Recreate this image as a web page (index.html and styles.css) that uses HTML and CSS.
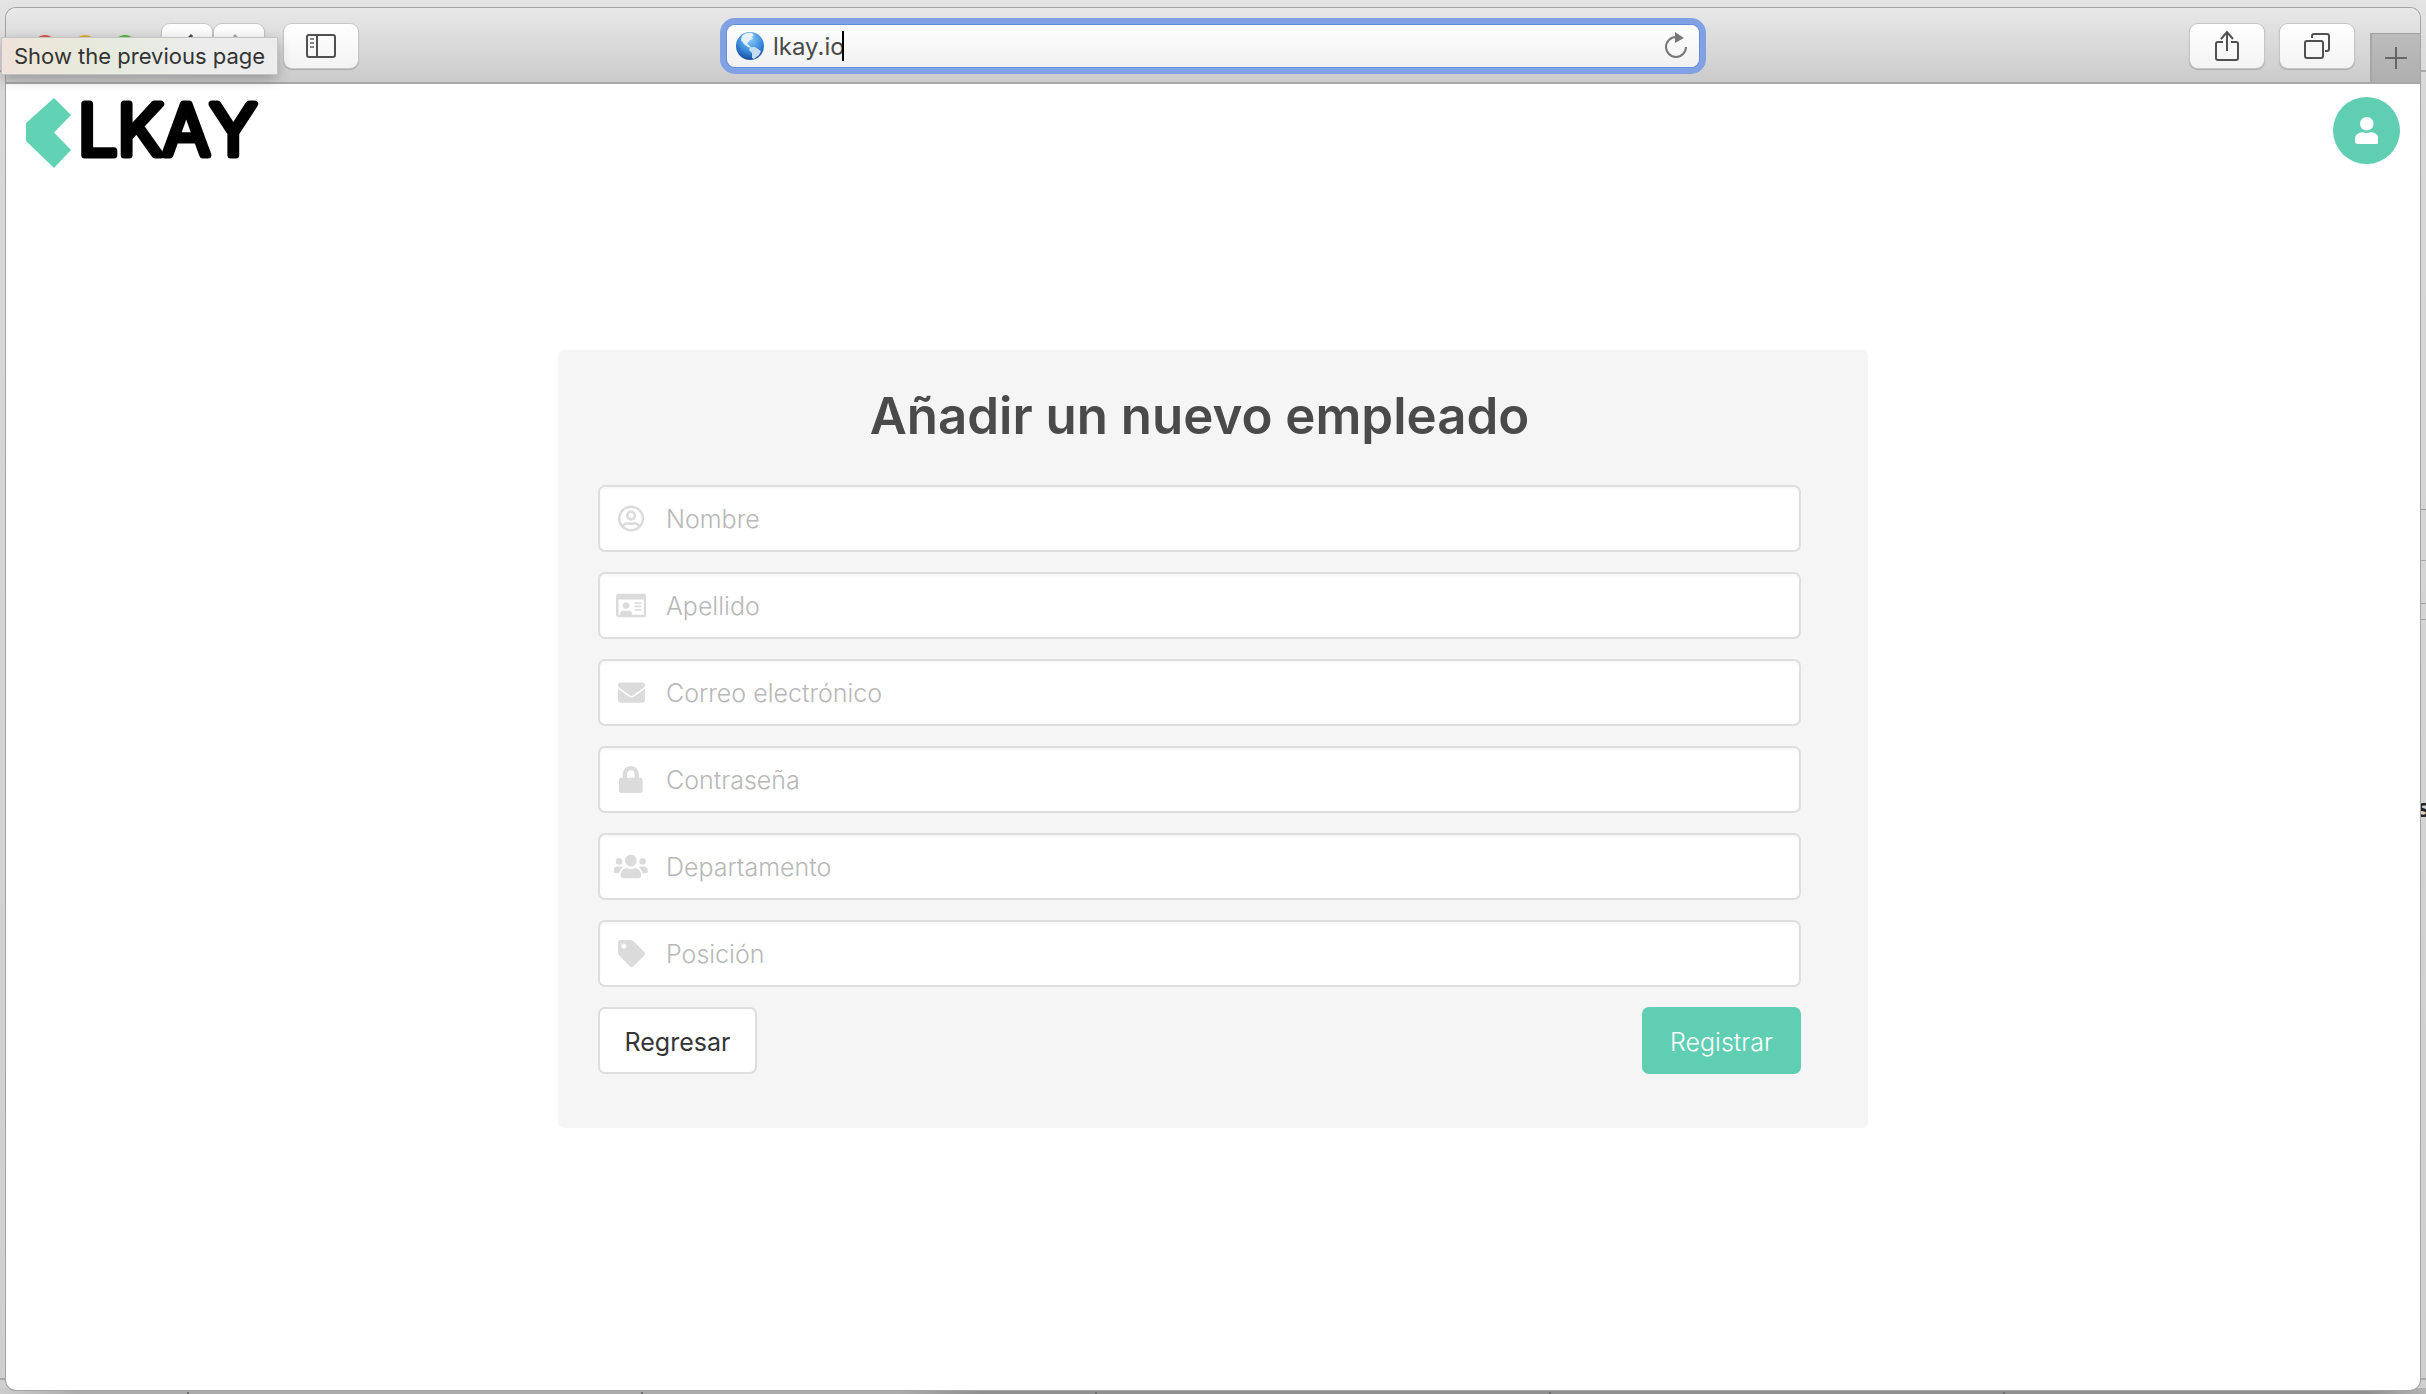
FILE: index.html
```html
<!DOCTYPE html>
<html lang="es">
<head>
<meta charset="utf-8">
<meta name="viewport" content="width=device-width, initial-scale=1">
<title>LKAY</title>
<link rel="stylesheet" href="styles.css">
</head>
<body>
<span class="behind-text" aria-hidden="true">s</span>
<div class="window">
  <div class="toolbar">
    <div class="toolbar-start">
      <div class="lights"><span class="light red"></span><span class="light amber"></span><span class="light green"></span></div>
      <div class="nav">
        <button class="tool nav-button" type="button" aria-label="Back"><svg width="14" height="24" viewBox="0 0 14 24"><path d="M12 1 2 12l10 11" fill="none" stroke="#4d4d4d" stroke-width="3"/></svg></button>
        <button class="tool nav-button" type="button" aria-label="Forward"><svg width="14" height="24" viewBox="0 0 14 24"><path d="m2 1 10 11L2 23" fill="none" stroke="#aaa" stroke-width="3"/></svg></button>
      </div>
      <button class="tool" type="button" aria-label="Sidebar"><svg width="30" height="24" viewBox="0 0 30 24"><path d="M3 1h24q2 0 2 2v18q0 2-2 2H3q-2 0-2-2V3q0-2 2-2zM11 1v22" fill="none" stroke="#505050" stroke-width="2"/><path d="M4 5h4M4 9h4M4 13h4" stroke="#888" stroke-width="2"/></svg></button>
    </div>
    <div class="address">
      <svg class="globe" width="30" height="30" viewBox="0 0 30 30">
        <defs><radialGradient id="sea" cx=".5" cy=".25" r=".75"><stop offset="0" stop-color="#8ccdf8"/><stop offset=".55" stop-color="#3f8fe0"/><stop offset="1" stop-color="#174f9c"/></radialGradient></defs>
        <circle cx="15" cy="15" r="14" fill="url(#sea)"/>
        <path d="M7 5q4-4 10-3l2 2-2 2 1 2-3 1-3 4 2 1 2 3-3-1-4-3-3-4z" fill="#e4f1f8"/>
        <path d="M15 16l5 0 6 4-2 4-5 4-2-1 0-5-3-3z" fill="#c3dcf2"/>
      </svg>
      <input class="url" type="text" value="lkay.io" aria-label="Address">
      <span class="caret"></span>
      <button class="reload" type="button" aria-label="Reload"><svg width="24" height="28" viewBox="0 0 24 28"><path d="M22 15a10 10 0 1 1-10-10" fill="none" stroke="#777" stroke-width="2"/><path d="M11 0v11l9-5z" fill="#777"/></svg></button>
    </div>
    <div class="toolbar-end">
      <button class="tool" type="button" aria-label="Share"><svg width="24" height="32" viewBox="0 0 24 32"><path d="M8 12H3q-2 0-2 2v14q0 2 2 2h18q2 0 2-2V14q0-2-2-2h-5M12 21V3M6 9l6-7 6 7" fill="none" stroke="#505050" stroke-width="2"/></svg></button>
      <button class="tool" type="button" aria-label="Tabs"><svg width="26" height="26" viewBox="0 0 26 26"><path d="M3 8h14q2 0 2 2v13q0 2-2 2H3q-2 0-2-2V10q0-2 2-2zM8 5V3q0-2 2-2h13q2 0 2 2v13q0 2-2 2h-2" fill="none" stroke="#505050" stroke-width="2"/></svg></button>
      <button class="new-tab" type="button" aria-label="New tab"><svg width="22" height="22" viewBox="0 0 22 22"><path d="M11 0v22M0 11h22" stroke="#666" stroke-width="2"/></svg></button>
    </div>
    <div class="tooltip" role="tooltip">Show the previous page</div>
  </div>

  <header class="site-header">
    <a class="logo" href="#" aria-label="LKAY">
      <svg width="252" height="72" viewBox="0 0 252 72">
        <path d="M28 1 45 18 28 35.500 45 53 28 71 0 44V26z" fill="#62d2b5"/>
        <text class="logo-text" x="52" y="58">LKAY</text>
      </svg>
    </a>
    <button class="avatar" type="button" aria-label="Cuenta"><svg class="icon" viewBox="0 0 448 512"><path d="M224 256c70.700 0 128-57.300 128-128S294.700 0 224 0 96 57.300 96 128s57.300 128 128 128zm89.600 32h-16.700c-22.200 10.200-46.900 16-72.900 16s-50.600-5.800-72.900-16h-16.700C60.200 288 0 348.200 0 422.400V464c0 26.500 21.500 48 48 48h352c26.500 0 48-21.500 48-48v-41.600c0-74.200-60.200-134.400-134.400-134.400z"/></svg></button>
  </header>

  <main>
    <form class="card">
      <h1>Añadir un nuevo empleado</h1>
      <label class="field">
        <span class="field-icon"><svg class="icon" viewBox="0 0 496 512"><path d="M248 104c-53 0-96 43-96 96s43 96 96 96 96-43 96-96-43-96-96-96zm0 144c-26.500 0-48-21.500-48-48s21.500-48 48-48 48 21.500 48 48-21.500 48-48 48zm0-240C111 8 0 119 0 256s111 248 248 248 248-111 248-248S385 8 248 8zm0 448c-49.700 0-95.100-18.300-130.100-48.400 14.900-23 40.400-38.600 69.600-39.500 20.800 6.400 40.600 9.600 60.500 9.600s39.700-3.100 60.500-9.600c29.200 1 54.700 16.500 69.600 39.500-35 30.100-80.400 48.400-130.100 48.400zm162.700-84.100c-24.400-31.400-62.100-51.900-105.100-51.900-10.200 0-26 9.600-57.600 9.600-31.500 0-47.400-9.600-57.600-9.600-42.900 0-80.600 20.500-105.100 51.900C61.900 339.200 48 299.200 48 256c0-110.300 89.700-200 200-200s200 89.700 200 200c0 43.200-13.900 83.200-37.300 115.900z"/></svg></span>
        <input type="text" placeholder="Nombre" aria-label="Nombre">
      </label>
      <label class="field">
        <span class="field-icon"><svg class="icon" viewBox="0 0 576 512"><path d="M528 32H48C21.500 32 0 53.500 0 80v352c0 26.500 21.500 48 48 48h480c26.500 0 48-21.500 48-48V80c0-26.500-21.500-48-48-48zm0 400H303.200c.9-4.500.8 3.600.8-22.400 0-31.800-30.100-57.600-67.200-57.600-10.800 0-18.700 8-44.800 8-26.900 0-33.400-8-44.800-8-37.100 0-67.200 25.800-67.200 57.600 0 26-.2 17.900.8 22.400H48V144h480v288zm-168-80h112c4.400 0 8-3.600 8-8v-16c0-4.400-3.600-8-8-8H360c-4.400 0-8 3.600-8 8v16c0 4.400 3.600 8 8 8zm0-64h112c4.400 0 8-3.600 8-8v-16c0-4.400-3.600-8-8-8H360c-4.400 0-8 3.600-8 8v16c0 4.400 3.600 8 8 8zm0-64h112c4.400 0 8-3.600 8-8v-16c0-4.400-3.600-8-8-8H360c-4.400 0-8 3.600-8 8v16c0 4.400 3.600 8 8 8zm-168 96c35.300 0 64-28.700 64-64s-28.700-64-64-64-64 28.700-64 64 28.700 64 64 64z"/></svg></span>
        <input type="text" placeholder="Apellido" aria-label="Apellido">
      </label>
      <label class="field">
        <span class="field-icon"><svg class="icon" viewBox="0 0 512 512"><path d="M502.300 190.800c3.900-3.100 9.700-.2 9.700 4.700V400c0 26.500-21.500 48-48 48H48c-26.500 0-48-21.500-48-48V195.600c0-5 5.700-7.800 9.700-4.700 22.400 17.400 52.100 39.500 154.100 113.600 21.100 15.400 56.700 47.800 92.200 47.600 35.700.3 72-32.800 92.300-47.600 102-74.100 131.600-96.300 154-113.700zM256 320c23.200.4 56.600-29.200 73.400-41.400 132.700-96.300 142.800-104.700 173.400-128.700 5.800-4.500 9.200-11.500 9.200-18.900v-19c0-26.500-21.500-48-48-48H48c-26.500 0-48 21.500-48 48v19c0 7.400 3.400 14.300 9.200 18.900 30.600 23.900 40.700 32.400 173.400 128.700 16.800 12.200 50.200 41.800 73.400 41.400z"/></svg></span>
        <input type="email" placeholder="Correo electrónico" aria-label="Correo electrónico">
      </label>
      <label class="field">
        <span class="field-icon"><svg class="icon" viewBox="0 0 448 512"><path d="M400 224h-24v-72C376 68.200 307.800 0 224 0S72 68.200 72 152v72H48c-26.500 0-48 21.500-48 48v192c0 26.500 21.500 48 48 48h352c26.500 0 48-21.500 48-48V272c0-26.500-21.500-48-48-48zm-104 0H152v-72c0-39.700 32.300-72 72-72s72 32.300 72 72v72z"/></svg></span>
        <input type="password" placeholder="Contraseña" aria-label="Contraseña">
      </label>
      <label class="field">
        <span class="field-icon"><svg class="icon" viewBox="0 0 640 512"><path d="M96 224c35.300 0 64-28.700 64-64s-28.700-64-64-64-64 28.700-64 64 28.700 64 64 64zm448 0c35.300 0 64-28.700 64-64s-28.700-64-64-64-64 28.700-64 64 28.700 64 64 64zm32 32h-64c-17.600 0-33.500 7.100-45.100 18.600 40.300 22.100 68.900 62 75.100 109.400h66c17.700 0 32-14.300 32-32v-32c0-35.300-28.700-64-64-64zm-256 0c61.900 0 112-50.100 112-112S381.900 32 320 32 208 82.100 208 144s50.100 112 112 112zm76.800 32h-8.300c-20.800 10-43.900 16-68.500 16s-47.600-6-68.500-16h-8.300C179.600 288 128 339.600 128 403.200V432c0 26.500 21.500 48 48 48h288c26.500 0 48-21.500 48-48v-28.800c0-63.600-51.600-115.200-115.200-115.200zm-223.700-13.400C161.500 263.100 145.600 256 128 256H64c-35.300 0-64 28.700-64 64v32c0 17.700 14.300 32 32 32h65.900c6.300-47.400 34.900-87.300 75.200-109.400z"/></svg></span>
        <input type="text" placeholder="Departamento" aria-label="Departamento">
      </label>
      <label class="field">
        <span class="field-icon"><svg class="icon" viewBox="0 0 512 512"><path d="M0 252.118V48C0 21.490 21.490 0 48 0h204.118a48 48 0 0 1 33.941 14.059l211.882 211.882c18.745 18.745 18.745 49.137 0 67.882L293.823 497.941c-18.745 18.745-49.137 18.745-67.882 0L14.059 286.059A48 48 0 0 1 0 252.118zM112 64c-26.510 0-48 21.490-48 48s21.490 48 48 48 48-21.490 48-48-21.490-48-48-48z"/></svg></span>
        <input type="text" placeholder="Posición" aria-label="Posición">
      </label>
      <div class="actions">
        <button class="button" type="button">Regresar</button>
        <button class="button primary" type="submit">Registrar</button>
      </div>
    </form>
  </main>
</div>
</body>
</html>
```

FILE: styles.css
```css
*,
*::before,
*::after {
  box-sizing: border-box;
}

body {
  position: relative;
  display: flex;
  min-height: 100vh;
  margin: 0;
  padding: 8px 6px 4px;
  overflow-x: hidden;
  font-family: Inter, "Liberation Sans", sans-serif;
  background:
    linear-gradient(#9a9a9a, #9a9a9a) right 509px / 6px 1px no-repeat,
    linear-gradient(#aaa, #aaa) right 560px / 6px 1px no-repeat,
    linear-gradient(#a4a4a4, #a4a4a4) right 603px / 6px 1px no-repeat,
    linear-gradient(#a4a4a4, #a4a4a4) right 619px / 6px 1px no-repeat,
    linear-gradient(#aaa, #aaa) 0 70px / 100% 2px no-repeat,
    linear-gradient(#aaa, #aaa) 0 1378px / 100% 2px no-repeat,
    repeating-linear-gradient(90deg, transparent 0 187px, #707070 187px 189px, transparent 189px 454px) bottom / 100% 2px no-repeat,
    linear-gradient(90deg, #ccc, #aaa 80px, #aaa 900px, #909090 980px, #909090 calc(100% - 60px), #b4b4b4) bottom / 100% 6px no-repeat,
    linear-gradient(#e4e4e4, #d8d8d8 80px, #cfcfcf);
}

button,
input {
  margin: 0;
  font: inherit;
}

button {
  padding: 0;
  border: 0;
  cursor: pointer;
}

svg {
  display: block;
}

.behind-text {
  position: absolute;
  top: 792px;
  right: -5px;
  font: italic bold 26px/32px "Liberation Sans", sans-serif;
  color: #222;
}

.window {
  position: relative;
  flex: 1;
  min-width: 0;
  background: #fff;
  border-radius: 10px;
  box-shadow: 0 0 0 1px #a4a4a4;
}

/* Browser toolbar */

.toolbar {
  position: relative;
  display: grid;
  grid-template-columns: 1fr minmax(0, 972px) 1fr;
  align-items: center;
  height: 76px;
  padding: 2px 0 0;
  border-bottom: 2px solid #a8a8a8;
  border-radius: 10px 10px 0 0;
  background: linear-gradient(#e8e8e8, #cbcbcb);
}

.toolbar-start,
.toolbar-end {
  display: flex;
  align-items: center;
}

.toolbar-start {
  gap: 20px;
  padding-left: 28px;
}

.lights {
  display: flex;
  gap: 18px;
  margin-right: 6px;
}

.light {
  width: 22px;
  height: 22px;
  border-radius: 50%;
}

.red { background: #e0554c; }
.amber { background: #e6ad3c; }
.green { background: #55b73c; }

.nav {
  display: flex;
  gap: 2px;
}

.tool {
  display: grid;
  place-items: center;
  width: 74px;
  height: 44px;
  border-radius: 8px;
  background: linear-gradient(#fff, #f3f3f3);
  box-shadow: 0 0 0 1px #c6c6c6, 0 1px 1px 1px #aaa;
}

.nav-button {
  width: 50px;
}

.address {
  display: flex;
  align-items: center;
  height: 42px;
  padding: 0 11px 0 8px;
  border-radius: 8px;
  background: linear-gradient(#fff, #f1f1f1);
  box-shadow: 0 0 0 1px #668bd8, 0 0 0 7px #80a1e4;
}

.url {
  width: 70px;
  margin-left: 8px;
  padding: 2px 0 0;
  border: 0;
  outline: 0;
  background: none;
  font-size: 24px;
  line-height: 30px;
  color: #4a4a4a;
  field-sizing: content;
}

.caret {
  width: 2px;
  height: 30px;
  margin-left: -1px;
  background: #000;
}

.reload {
  margin-left: auto;
  background: none;
}

.toolbar-end {
  justify-content: flex-end;
  align-self: stretch;
  gap: 16px;
}

.new-tab {
  display: grid;
  place-items: center;
  align-self: flex-end;
  width: 50px;
  height: 49px;
  border-top: 1px solid #a0a0a0;
  border-left: 2px solid #a6a6a6;
  background: linear-gradient(#bcbcbc, #afafaf);
}

.tooltip {
  position: absolute;
  top: 30px;
  left: -4px;
  padding: 0 12px;
  background: linear-gradient(90deg, #efe2da, #eae7da 50px, #e6ebdf 120px, #ececec 200px);
  box-shadow: 0 0 0 1px #c4c4c4, 0 4px 14px rgb(0 0 0 / 30%);
  font-size: 22px;
  line-height: 36px;
  white-space: nowrap;
  color: #333;
}

/* Page */

.site-header {
  display: flex;
  align-items: flex-start;
  justify-content: space-between;
  padding: 13px 20px;
}

.logo svg {
  overflow: visible;
}

.logo-text {
  font-family: Inter, sans-serif;
  font-size: 70px;
  font-weight: 300;
  font-kerning: none;
  fill: #000;
  stroke: #000;
  stroke-width: 7px;
  stroke-linejoin: round;
}

.icon {
  height: 27px;
  fill: currentColor;
}

.avatar {
  display: grid;
  place-items: center;
  width: 67px;
  height: 67px;
  border-radius: 50%;
  background: #5fceb3;
  color: #fff;
}

main {
  padding: 168px 20px 48px;
}

.card {
  display: flex;
  flex-direction: column;
  gap: 20px;
  max-width: 1310px;
  margin: 0 auto;
  padding: 34px 67px 54px 40px;
  border-radius: 6px;
  background: #f5f5f5;
}

h1 {
  margin: 0 0 18px;
  font-size: 51px;
  font-weight: 600;
  line-height: 63px;
  text-align: center;
  color: #4a4a4a;
}

.field {
  display: flex;
  height: 67px;
  border: 2px solid #dedede;
  border-radius: 7px;
  background: #fff;
  box-shadow: inset 0 2px 3px rgb(0 0 0 / 4%);
}

.field-icon {
  display: grid;
  place-items: center;
  flex: 0 0 62px;
  color: #dbdbdb;
}

.field input {
  flex: 1;
  min-width: 0;
  padding: 1px 16px 0 4px;
  border: 0;
  outline: 0;
  background: none;
  font-size: 25px;
  font-weight: 300;
  color: #363636;
}

.field input::placeholder {
  color: #b8b8b8;
  opacity: 1;
}

.actions {
  display: flex;
  justify-content: space-between;
}

.button {
  width: 159px;
  height: 67px;
  padding-top: 2px;
  border: 2px solid #dedede;
  border-radius: 7px;
  background: #fff;
  font-size: 25px;
  color: #363636;
}

.primary {
  border-color: #5fceb3;
  background: #5fceb3;
  font-weight: 300;
  color: #fff;
}
```
